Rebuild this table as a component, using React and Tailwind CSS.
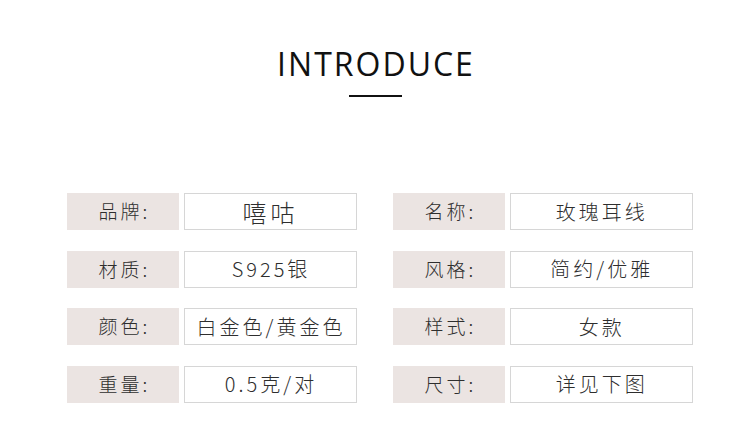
import React from "react";

const cjk = { fontFamily: '"Noto Sans CJK SC", "Noto Sans", sans-serif' };

function Row({ label, value, valueW, big }) {
  return (
    <div className="flex items-stretch h-[37px]">
      <div className="w-[112px] bg-[#ebe4e2] flex items-center justify-center text-[19px] font-light text-[#2e2e2e] tracking-[3px] pl-[3px]" style={cjk}>
        {label}
      </div>
      <div
        className={`ml-[5px] border border-[#d6d6d6] flex items-center justify-center font-light text-[#2e2e2e] ${big ? "text-[24px] tracking-[4px]" : "text-[20px] tracking-[3px] pl-[1px]"} ${valueW}`}
        style={cjk}
      >
        {value}
      </div>
    </div>
  );
}

export default function App() {
  return (
    <div className="w-[750px] h-[428px] bg-white relative overflow-hidden">
      <div className="flex flex-col items-center pt-[44px]">
        <div
          className="text-[32px] leading-[40px] tracking-[2px] text-[#111] pl-[2px]"
          style={{ fontFamily: '"Open Sans", sans-serif' }}
        >
          INTRODUCE
        </div>
        <div className="w-[53px] h-[2px] bg-[#111] mt-[11px]" />
      </div>
      <div className="grid grid-cols-[290px_300px] gap-x-[36px] gap-y-[20.5px] ml-[67px] mt-[96px]">
        <Row label="品牌:" value="嘻咕" valueW="w-[173px]" big />
        <Row label="名称:" value="玫瑰耳线" valueW="w-[184px]" />
        <Row label="材质:" value="S925银" valueW="w-[173px]" />
        <Row label="风格:" value="简约/优雅" valueW="w-[184px]" />
        <Row label="颜色:" value="白金色/黄金色" valueW="w-[173px]" />
        <Row label="样式:" value="女款" valueW="w-[184px]" />
        <Row label="重量:" value="0.5克/对" valueW="w-[173px]" />
        <Row label="尺寸:" value="详见下图" valueW="w-[184px]" />
      </div>
    </div>
  );
}
